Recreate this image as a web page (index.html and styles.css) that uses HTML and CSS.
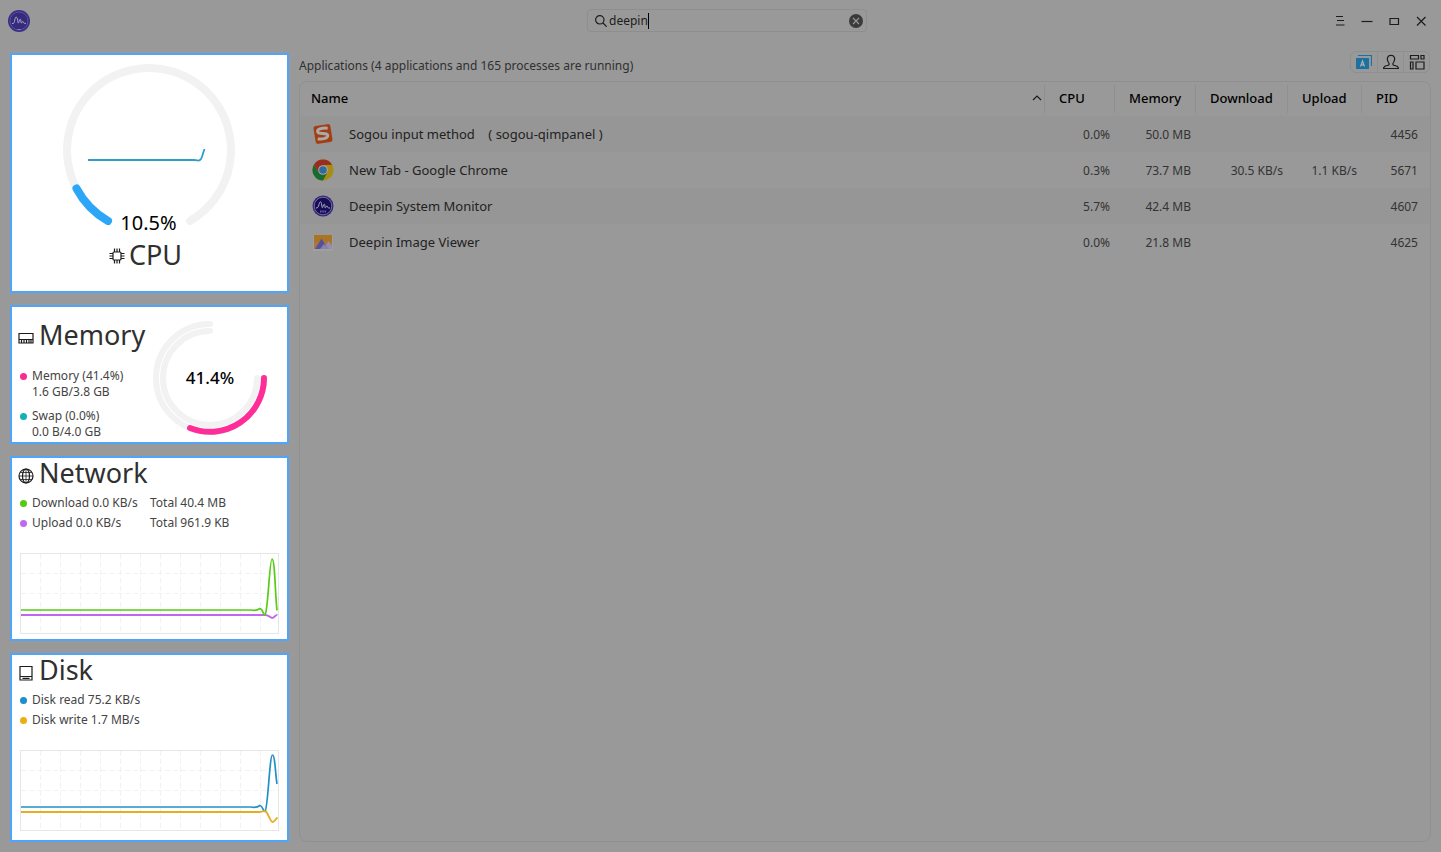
FILE: index.html
```html
<!DOCTYPE html>
<html lang="en">
<head>
<meta charset="utf-8">
<title>Deepin System Monitor</title>
<link rel="stylesheet" href="styles.css">
</head>
<body>
<svg class="defs" aria-hidden="true">
  <symbol id="chart-grid" viewBox="0 0 259 81">
    <path d="M20.5 1V80M40.5 1V80M60.5 1V80M80.5 1V80M100.5 1V80M120.5 1V80M140.5 1V80M160.5 1V80M180.5 1V80M200.5 1V80M220.5 1V80M240.5 1V80M1 20.5H258M1 40.5H258" fill="none" stroke="#f2f2f2" stroke-dasharray="5 3"/>
    <rect x=".5" y=".5" width="258" height="80" fill="none" stroke="#e6e6e6"/>
  </symbol>
</svg>
<header class="titlebar">
  <div class="brand">
    <svg width="22" height="22" viewBox="0 0 22 22" aria-hidden="true">
      <circle cx="11" cy="11" r="11" fill="#3a2e85"/><circle cx="11" cy="11" r="9" fill="#352a7c" stroke="#6159a0" stroke-width=".8"/>
      <path d="M4 13.5C6 14 6.300 12.500 6.800 10C7.300 6 9.200 6 9.700 10.500C10 14 10.500 14 11.500 10C12.300 8.500 13 9 13 12.500C13.500 14.500 14.300 11 15 11.500C15.500 13.500 16.500 13.500 18 13.300" fill="none" stroke="#a7a3c4" stroke-width="1"/>
      <path d="M9.500 19.500h3" stroke="#8883b5"/>
    </svg>
  </div>
  <form class="search">
    <svg width="12" height="12" viewBox="0 0 12 12" aria-hidden="true"><circle cx="4.800" cy="4.800" r="4.200"/><path d="M8 8l3.700 3.700"/></svg>
    <span class="field"><input type="text" value="deepin" size="6" aria-label="Search"><i class="caret"></i></span>
    <button class="clear" type="reset" aria-label="Clear search"><svg width="14" height="14" viewBox="0 0 14 14"><circle cx="7" cy="7" r="7" fill="#3b3b3b" stroke="none"/><path d="M4 4l6 6M10 4l-6 6" stroke="#999" stroke-width="1.100"/></svg></button>
  </form>
  <div class="controls">
    <button aria-label="Menu"><svg width="12" height="12" viewBox="0 0 12 12"><path d="M2 1.500h7M3 5.500h7M2 10h8.500"/></svg></button>
    <button aria-label="Minimize"><svg width="12" height="12" viewBox="0 0 12 12"><path d="M.5 6.500h11"/></svg></button>
    <button aria-label="Maximize"><svg width="12" height="12" viewBox="0 0 12 12"><path d="M2 3.500h8.500v6H2z"/></svg></button>
    <button aria-label="Close"><svg width="12" height="12" viewBox="0 0 12 12"><path d="M2 2l8.500 8.500M10.500 2L2 10.500"/></svg></button>
  </div>
</header>

<div class="layout">
  <aside class="sidebar">
    <section class="card cpu">
      <svg class="dial" width="172" height="164" viewBox="0 0 172 164" fill="none" stroke-linecap="round" aria-hidden="true">
        <path d="M45 157A82 82 0 1 1 127 157" stroke="#f2f2f2" stroke-width="8"/>
        <path d="M45 157A82 82 0 0 1 13.500 124.500" stroke="#2ca7f8" stroke-width="8"/>
        <path d="M25 96H131C135 96 136 98 138 95C139.500 93 140 88.500 141.500 85" stroke="#2e9ec9" stroke-width="1.800" stroke-linecap="butt"/>
      </svg>
      <p class="cpu-value">10.5%</p>
      <h2>
        <svg width="16" height="16" viewBox="0 0 16 16" aria-hidden="true"><rect x="4" y="4" width="8" height="8" rx="1"/><path d="M5.500 0.500V4M8 .5V4M10.500 .5V4M5.500 12v3.500M8 12v3.500M10.500 12v3.500M.5 5.500H4M.5 8H4M.5 10.500H4M12 5.500h3.500M12 8h3.500M12 10.500h3.500"/></svg>
        CPU
      </h2>
    </section>

    <section class="card memory">
      <div class="memory-info">
        <h2><svg width="16" height="16" viewBox="0 0 16 16" aria-hidden="true"><path d="M1 3.500h14v9.500H1zM1 9.500h14M3.500 10v3M6 10v3M8.500 10v3M11 10v3M13 10v3"/></svg>Memory</h2>
        <p><i class="dot pink"></i><span>Memory (41.4%)<br>1.6 GB/3.8 GB</span></p>
        <p><i class="dot teal"></i><span>Swap (0.0%)<br>0.0 B/4.0 GB</span></p>
      </div>
      <div class="memory-dial">
        <svg width="116" height="116" viewBox="0 0 116 116" fill="none" aria-hidden="true">
          <path d="M58 4A54 54 0 1 0 112 58" stroke="#f2f2f2" stroke-width="6" stroke-linecap="round"/>
          <path d="M58 11A47 47 0 1 0 105 58" stroke="#f2f2f2" stroke-width="6" stroke-linecap="round"/>
          <path d="M38 108A54 54 0 0 0 112 58" stroke="#fe2d98" stroke-width="6" stroke-linecap="round"/>
        </svg>
        <b>41.4%</b>
      </div>
    </section>

    <section class="card network">
      <h2><svg width="16" height="16" viewBox="0 0 16 16" aria-hidden="true"><circle cx="8" cy="8" r="7"/><ellipse cx="8" cy="8" rx="3.500" ry="7"/><path d="M8 1v14M1 8h14M2.500 4.500h11M2.500 11.500h11" stroke-width=".8"/></svg>Network</h2>
      <ul>
        <li><i class="dot green"></i><span>Download 0.0 KB/s</span><span>Total 40.4 MB</span></li>
        <li><i class="dot violet"></i><span>Upload 0.0 KB/s</span><span>Total 961.9 KB</span></li>
      </ul>
      <svg class="chart" viewBox="0 0 259 81" fill="none" aria-hidden="true">
        <use href="#chart-grid"/>
        <path d="M1 62H245C248 62 249 63.500 252 65C254 65 255.500 62 257.500 61.500" stroke="#bf67ee" stroke-width="1.800"/>
        <path d="M1 57H231C236 58 238 57 240 55.500C243 56 243 62 245 62C248 59 249.500 6 252 6C255 6 255 40 257 57.500" stroke="#56cc15" stroke-width="1.700"/>
      </svg>
    </section>

    <section class="card disk">
      <h2><svg width="16" height="16" viewBox="0 0 16 16" aria-hidden="true"><path d="M2 1.500h12v13.500H2zM2 11.500h12M4.500 13.300h7"/></svg>Disk</h2>
      <ul>
        <li><i class="dot blue"></i><span>Disk read 75.2 KB/s</span></li>
        <li><i class="dot amber"></i><span>Disk write 1.7 MB/s</span></li>
      </ul>
      <svg class="chart" viewBox="0 0 259 81" fill="none" aria-hidden="true">
        <use href="#chart-grid"/>
        <path d="M1 57H231C236 58 238 57 240 55.500C243 56 243 61.500 245 61.500C248 59 249.500 5 252.500 5C255 5 255.500 25 257 34" stroke="#248fc6" stroke-width="1.700"/>
        <path d="M1 62H239C243 62 244 60 246.500 62C249 66 250.500 71.500 252.500 72C254.500 72 255.500 69 257.500 67.500" stroke="#e2b01f" stroke-width="1.800"/>
      </svg>
    </section>
  </aside>

  <main class="content">
    <div class="toolbar">
      <h1>Applications (4 applications and 165 processes are running)</h1>
      <div class="views">
        <button aria-label="Applications"><svg width="16" height="16" viewBox="0 0 16 16"><path class="app-fill" d="M0 4h13v11H0z"/><path class="app-edge" d="M2 1.500h13.500V12"/><path class="app-letter" d="M4.500 12.500L6.500 7l2 5.500M5 10.800h3"/></svg></button>
        <button aria-label="My processes"><svg width="16" height="16" viewBox="0 0 16 16"><path d="M.5 14.500C.5 12 2 12 5 11.300C6.500 10.900 6.500 9.800 5.500 8.500C4.500 7 4 5 4.700 3.200C5.700.8 10.300.8 11.300 3.200C12 5 11.500 7 10.500 8.500C9.500 9.800 9.500 10.900 11 11.300C14 12 15.500 12 15.500 14.500z"/></svg></button>
        <button aria-label="All processes"><svg width="16" height="16" viewBox="0 0 16 16"><path d="M1.500 1.500h8v3.500h-8zM12 1.500h3v3.500h-3zM1.500 8h2.500v7h-2.500zM7 8h8v7h-8z"/></svg></button>
      </div>
    </div>
    <div class="panel">
      <table>
        <colgroup><col><col class="c-cpu"><col class="c-mem"><col class="c-down"><col class="c-up"><col class="c-pid"></colgroup>
        <thead>
          <tr><th><span class="sorted">Name<svg width="10" height="8" viewBox="0 0 10 8" aria-hidden="true"><path d="M1 6l4-4 4 4"/></svg></span></th><th>CPU</th><th>Memory</th><th>Download</th><th>Upload</th><th>PID</th></tr>
        </thead>
        <tbody>
          <tr><td><span class="app"><svg width="22" height="22" viewBox="0 0 22 22" aria-hidden="true"><g transform="rotate(-9 11 11)"><rect x="2.500" y="2" width="17" height="18" rx="2.500" fill="#a33e12"/><path d="M16.500 6C10 4.500 6 5.500 6 8C6 11.500 15.500 9.500 15.500 13C15.500 15.800 10 16.500 5 15" fill="none" stroke="#aaa" stroke-width="3"/></g></svg>Sogou input method &nbsp;&nbsp; ( sogou-qimpanel )</span></td><td>0.0%</td><td>50.0 MB</td><td></td><td></td><td>4456</td></tr>
          <tr><td><span class="app"><svg width="22" height="22" viewBox="0 0 22 22" aria-hidden="true"><circle cx="11" cy="11" r="10.500" fill="#a98c12"/><path d="M1.900 5.750A10.500 10.500 0 0 1 20.100 5.750L11 6L6.700 13.500z" fill="#982d20"/><path d="M1.900 5.750A10.500 10.500 0 0 0 11 21.500L15.300 13.500L6.700 13.500z" fill="#176b30"/><circle cx="11" cy="11" r="4.800" fill="#aaa"/><circle cx="11" cy="11" r="3.800" fill="#34699f"/></svg>New Tab - Google Chrome</span></td><td>0.3%</td><td>73.7 MB</td><td>30.5 KB/s</td><td>1.1 KB/s</td><td>5671</td></tr>
          <tr><td><span class="app"><svg width="22" height="22" viewBox="0 0 22 22" aria-hidden="true"><circle cx="11" cy="11" r="10.500" fill="#34277c"/><circle cx="11" cy="11" r="8.800" fill="#160e55" stroke="#8580a8" stroke-width=".8"/><path d="M4 13C6 13 6.300 12 7 9.500C8 5.500 9.300 6 9.700 10C10 14 10.800 13 11.500 10C12.500 8 13 10 13 12.500C13.500 14 14.300 10.500 15 11C15.500 13 16.500 13 18 13" fill="none" stroke="#aaa6c4" stroke-width="1"/><path d="M8 16.500h1.500M10.300 16.500h1.500M12.600 16.500h1.500" stroke="#6961a5" stroke-width="2"/></svg>Deepin System Monitor</span></td><td>5.7%</td><td>42.4 MB</td><td></td><td></td><td>4607</td></tr>
          <tr><td><span class="app"><svg width="22" height="22" viewBox="0 0 22 22" aria-hidden="true"><path d="M1 4h20v16H1z" fill="#a39f9c"/><path d="M2 4h18v14H2z" fill="#a87524"/><path d="M2 11h18v7H2z" fill="#a77748"/><path d="M12 18l4.500-8L20 15v3z" fill="#938fae"/><path d="M3 18L9.500 7.500L16 18z" fill="#57509a"/><path d="M8 18l4-5 5 5z" fill="#8783af"/></svg>Deepin Image Viewer</span></td><td>0.0%</td><td>21.8 MB</td><td></td><td></td><td>4625</td></tr>
        </tbody>
      </table>
    </div>
  </main>
</div>
</body>
</html>
```
FILE: styles.css
```css
* { box-sizing: border-box; }
body {
  margin: 0;
  min-height: 100vh;
  display: flex;
  flex-direction: column;
  background: #999;
  color: #303030;
  font: 12px/16px "Noto Sans", "Open Sans", sans-serif;
}
h1, h2, p, ul { margin: 0; padding: 0; font-weight: 400; }
ul { list-style: none; }
svg { flex: none; display: block; }
.defs { position: absolute; width: 0; height: 0; }
button {
  display: grid;
  place-items: center;
  padding: 0;
  border: 0;
  background: none;
  color: inherit;
}
button svg, h2 svg, .search > svg, .sorted svg { fill: none; stroke: #1c1c1c; stroke-width: 1.2; }

.titlebar { display: flex; align-items: center; height: 41px; }
.brand { flex: 1 1 20px; padding-left: 8px; }
.search {
  display: flex;
  align-items: center;
  gap: 2px;
  width: 280px;
  height: 23px;
  padding: 0 3px 0 7px;
  border: 1px solid #8e8e8e;
  border-radius: 4px;
}
.field { flex: 1; display: flex; align-items: center; }
.field input {
  width: 39px;
  padding: 0;
  border: 0;
  outline: 0;
  background: none;
  color: #1c1c1c;
  font: inherit;
}
.caret { width: 1px; height: 16px; background: #000; }
.controls { flex: 1 1 0; display: flex; justify-content: flex-end; padding-right: 7px; }
.controls button { width: 27px; height: 27px; }

.layout { flex: 1; display: flex; gap: 10px; padding: 0 10px 10px; }
.sidebar { flex: none; width: 279px; display: flex; flex-direction: column; gap: 12px; padding-top: 12px; }
.card { padding: 0 8px; border: 2px solid #4ea5fb; background: #fff; color: #444; }
.card h2 { display: flex; align-items: center; gap: 5px; color: #303030; font-size: 27px; line-height: 30px; }
.card h2 svg { margin: 5px 0 0 -2px; }

.cpu { display: flex; flex-direction: column; align-items: center; padding: 9px 10px 16px 8px; }
.cpu-value { margin-top: -20px; color: #000; font-size: 20px; line-height: 30px; }
.cpu h2 { gap: 4px; margin: 1px 4px 4px 0; line-height: 32px; }
.cpu h2 svg { margin-top: 2px; }

.memory { display: flex; justify-content: space-between; padding-right: 19px; }
.memory-info { padding: 13px 0 2px; white-space: nowrap; }
.memory-info h2 { margin-bottom: 18px; }
.memory-info p { display: flex; margin-bottom: 8px; }
.memory-info p:last-child { margin-bottom: 0; }
.memory-dial { display: grid; place-items: center; align-self: flex-start; padding-top: 13px; }
.memory-dial > * { grid-area: 1 / 1; }
.memory-dial b { color: #000; font-size: 17px; font-weight: 500; }

.dot { flex: none; width: 7px; height: 7px; margin: 5px 5px 0 0; border-radius: 50%; }
.pink { background: #f62d94; }
.teal { background: #14b0b8; }
.green { background: #52cc12; }
.violet { background: #c068f0; }
.blue { background: #1b90cd; }
.amber { background: #eab012; }
.card ul { margin: 5px 0 20px; line-height: 20px; }
.card li { display: flex; }
.card li .dot { margin-top: 7px; }
.card li span:nth-of-type(1) { width: 118px; white-space: nowrap; }
.chart { width: 100%; }
.network { padding-bottom: 5px; }
.disk { padding-bottom: 9px; }

.content { flex: 1; min-width: 0; display: flex; flex-direction: column; }
.toolbar { display: flex; justify-content: space-between; height: 40px; padding: 10px 1px 0 0; }
.toolbar h1 { padding-top: 7px; font-size: 12px; line-height: 16px; }
.views { display: flex; height: 22px; border: 1px solid #8f8f8f; border-radius: 6px; }
.views button { width: 26px; }
.views button + button { border-left: 1px solid #909090; }
.app-fill { fill: #1b719f; stroke: none; }
.app-edge { stroke: #1b719f; }
.app-letter { stroke: #b0b0b0; }
.panel { flex: 1; border: 1px solid #909090; border-radius: 8px; overflow: hidden; }
table { width: 100%; border-collapse: collapse; table-layout: fixed; }
.c-cpu { width: 70px; }
.c-mem { width: 81px; }
.c-down { width: 92px; }
.c-up { width: 74px; }
.c-pid { width: 69px; }
th {
  height: 34px;
  padding: 0 0 2px 15px;
  background: linear-gradient(#8f8f8f, #8f8f8f) left 3px / 1px 28px no-repeat;
  color: #000;
  font-size: 13px;
  font-weight: 500;
  text-align: left;
}
th:first-child { padding: 0 2px 2px 11px; background: none; }
.sorted { display: flex; align-items: center; justify-content: space-between; }
td { height: 36px; padding: 2px 4px 0 0; color: #333; text-align: right; white-space: nowrap; }
td:first-child { padding: 0 0 0 12px; color: #222; font-size: 13px; }
td:last-child { padding-right: 12px; }
.app { display: flex; align-items: center; gap: 15px; }
tbody tr:nth-child(odd) { background: #969696; }
```
